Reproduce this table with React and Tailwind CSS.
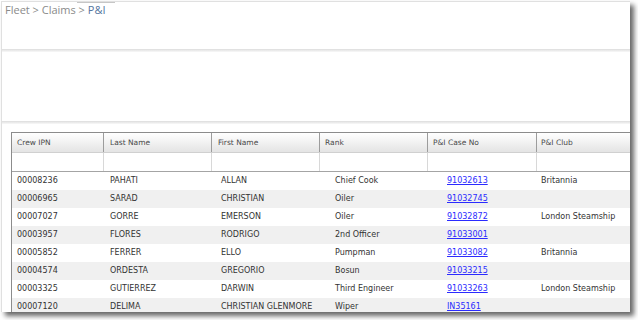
const COLUMNS = [
  { label: 'Crew IPN', head: 'pl-[5px]', cell: 'pl-[5px]' },
  { label: 'Last Name', head: 'pl-[6px]', cell: 'pl-[6px]' },
  { label: 'First Name', head: 'pl-[6px]', cell: 'pl-[9px]' },
  { label: 'Rank', head: 'pl-[5px]', cell: 'pl-[15px]' },
  { label: 'P&I Case No', head: 'pl-[5px]', cell: 'pl-[19px]' },
  { label: 'P&I Club', head: 'pl-[4px]', cell: 'pl-[4px]' },
]

const CREW = [
  ['00008236', 'PAHATI', 'ALLAN', 'Chief Cook', '91032613', 'Britannia'],
  ['00006965', 'SARAD', 'CHRISTIAN', 'Oiler', '91032745', ''],
  ['00007027', 'GORRE', 'EMERSON', 'Oiler', '91032872', 'London Steamship'],
  ['00003957', 'FLORES', 'RODRIGO', '2nd Officer', '91033001', ''],
  ['00005852', 'FERRER', 'ELLO', 'Pumpman', '91033082', 'Britannia'],
  ['00004574', 'ORDESTA', 'GREGORIO', 'Bosun', '91033215', ''],
  ['00003325', 'GUTIERREZ', 'DARWIN', 'Third Engineer', '91033263', 'London Steamship'],
  ['00007120', 'DELIMA', 'CHRISTIAN GLENMORE', 'Wiper', 'IN35161', ''],
]

const GRID = 'grid grid-cols-[92px_108px_108px_108px_109px_1fr]'

export default function App() {
  return (
    <div className="w-[638px] h-[320px] bg-white pt-px pl-px overflow-hidden">
      {/* window */}
      <div className="w-[629px] h-[311px] bg-white border-t border-l border-[#e0e0e0] overflow-hidden flex flex-col shadow-[4px_4px_5px_rgba(0,0,0,0.6)]">

        {/* breadcrumb panel */}
        <div className="h-[47px] shrink-0">
          <div className="-mt-px ml-[75px] w-[38px] h-[2px] bg-[#c6c6c6]" />
          <div className="pl-[3px] text-[11px] leading-[14px] text-[#8a8a8a]"
            style={{ fontFamily: '"Open Sans", sans-serif' }}>
            Fleet &gt; Claims &gt; <span className="text-[#5576a0]">P&amp;I</span>
          </div>
        </div>
        <div className="h-[3px] shrink-0 bg-gradient-to-b from-[#dcdcdc] to-[#f9f9f9]" />

        {/* empty panel */}
        <div className="h-[69px] shrink-0" />
        <div className="h-[3px] shrink-0 bg-gradient-to-b from-[#dcdcdc] to-[#f9f9f9]" />

        {/* grid */}
        <div className="pt-[8px] pl-[9px]">
          <div className="w-[620px] border-t border-l border-[#8c8c8c]"
            style={{ fontFamily: '"DejaVu Sans", Verdana, sans-serif' }}>

            {/* header */}
            <div className={`${GRID} h-[20px] bg-gradient-to-b from-white to-[#e4e4e4] border-b border-[#d0d0d0]`}>
              {COLUMNS.map((c, i) => (
                <div key={c.label}
                  className={`${c.head} flex items-center text-[7.5px] text-[#4a4a4a] ${i < 5 ? 'border-r border-[#9c9c9c]' : ''}`}>
                  {c.label}
                </div>
              ))}
            </div>

            {/* filter row */}
            <div className={`${GRID} h-[19px] border-b border-[#a4a4a4]`}>
              {COLUMNS.map((c, i) => (
                <div key={c.label} className={i < 5 ? 'border-r border-[#d8d8d8]' : ''} />
              ))}
            </div>

            {/* rows */}
            <div>
              {CREW.map((r, ri) => (
                <div key={r[0]}
                  className={`${GRID} h-[18px] items-center text-[8px] text-[#333] ${ri % 2 ? 'bg-[#f0f0f0]' : 'bg-white'}`}>
                  {r.map((v, ci) => (
                    <div key={ci} className={`${COLUMNS[ci].cell} whitespace-nowrap`}>
                      {ci === 4
                        ? <a href="#" className="text-[#2b2bff] underline">{v}</a>
                        : v}
                    </div>
                  ))}
                </div>
              ))}
            </div>
          </div>
        </div>
      </div>
    </div>
  )
}
